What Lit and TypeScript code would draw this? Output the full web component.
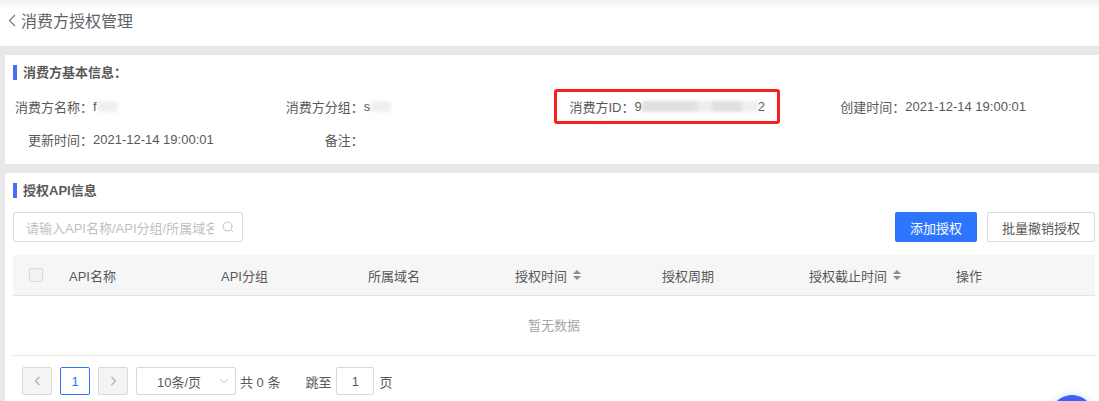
import { LitElement, html, css, svg } from "lit";
import { customElement } from "lit/decorators.js";

const sortIcon = svg`<svg class="sort" width="8" height="10" viewBox="0 0 8 10"><path d="M4 0 8 4H0zM4 10 0 6h8z" fill="#8c8c8c"/></svg>`;

@customElement("app-root")
export class AppRoot extends LitElement {
  static styles = css`
    :host {
      display: block;
      width: 1099px;
      height: 401px;
      overflow: hidden;
      position: relative;
      background: #e8e8e8;
      font-family: "Liberation Sans", "Noto Sans CJK SC", sans-serif;
      font-size: 13px;
      color: #595959;
    }
    .header {
      height: 46px;
      background: linear-gradient(#efefef 0, #fff 9px);
      display: flex;
      align-items: center;
      padding: 0 0 6px 8px;
      box-sizing: border-box;
      color: #5f6368;
      font-size: 16px;
      gap: 5px;
    }
    .body {
      padding: 9px 0 0 5px;
      display: flex;
      flex-direction: column;
      gap: 9px;
    }
    .card { background: #fff; }
    .info { height: 109px; padding: 10px 11px 0 8px; box-sizing: border-box; }
    .title {
      display: flex;
      align-items: center;
      gap: 6px;
      font-weight: bold;
      font-size: 13px;
      color: #595959;
      height: 15px;
      line-height: 15px;
    }
    .title::before {
      content: "";
      width: 4px;
      height: 15px;
      background: #4a6cf7;
    }
    .grid {
      display: grid;
      grid-template-columns: repeat(4, 1fr);
      grid-auto-rows: 33px;
      margin: 10px 0 0 -8px;
      align-items: center;
    }
    .item { display: flex; align-items: center; white-space: nowrap; }
    .label { width: 88px; text-align: right; color: #595959; flex: none; }
    .value { color: #595959; display: flex; align-items: center; }
    .smear { display: inline-block; height: 11px; filter: blur(1.5px); }
    .s1 { width: 20px; margin-left: 1px; background: #e6e6e6; opacity: .6; }
    .s2 {
      width: 116px;
      background: linear-gradient(90deg, #e0e0e0 0 45%, #eeeeee 50% 58%, #e0e0e0 62% 84%, #f0f0f0 88% 100%);
    }
    .redbox {
      position: absolute;
      left: 554px;
      top: 89px;
      width: 226px;
      height: 35px;
      box-sizing: border-box;
      border: 3px solid #f5201a;
      border-radius: 3px;
    }
    .api { height: 240px; padding: 10px 4px 0 8px; box-sizing: border-box; }
    .toolbar {
      display: flex;
      align-items: center;
      gap: 10px;
      margin-top: 14px;
      height: 30px;
    }
    .search {
      width: 230px;
      height: 30px;
      box-sizing: border-box;
      border: 1px solid #d9d9d9;
      border-radius: 2px;
      display: flex;
      align-items: center;
      padding: 0 8px 0 12px;
      gap: 8px;
      color: #bfbfbf;
    }
    .ph { flex: 1; overflow: hidden; white-space: nowrap; }
    .spacer { flex: 1; }
    .btn {
      height: 30px;
      box-sizing: border-box;
      border-radius: 2px;
      display: flex;
      align-items: center;
      justify-content: center;
      white-space: nowrap;
    }
    .primary { width: 82px; background: #2d74ff; color: #fff; }
    .ghost { width: 108px; border: 1px solid #d9d9d9; color: #595959; }
    .thead {
      margin-top: 13px;
      height: 41px;
      box-sizing: border-box;
      background: #f6f6f6;
      border-bottom: 1px solid #e4e4e4;
      display: grid;
      grid-template-columns: 56px 152px 147px 147px 147px 147px 147px 1fr;
      align-items: center;
      color: #595959;
    }
    .th { display: flex; align-items: center; gap: 6px; }
    .check {
      width: 14px;
      height: 14px;
      box-sizing: border-box;
      border: 1px solid #d9d9d9;
      border-radius: 2px;
      background: #f2f2f2;
      margin-left: 16px;
    }
    .empty {
      height: 59px;
      box-sizing: content-box;
      border-bottom: 1px solid #e4e4e4;
      display: flex;
      align-items: center;
      justify-content: center;
      color: #a6a6a6;
    }
    .empty span { margin-bottom: 2px; }
    .pager {
      display: flex;
      align-items: center;
      height: 28px;
      margin-top: 11px;
      padding-left: 9px;
      color: #595959;
    }
    .pg {
      width: 30px;
      height: 28px;
      box-sizing: border-box;
      border: 1px solid #d9d9d9;
      border-radius: 2px;
      display: flex;
      align-items: center;
      justify-content: center;
    }
    .pg.off { background: #f4f4f4; }
    .pg.on { border-color: #2d74ff; color: #2d74ff; margin: 0 8px; }
    .select {
      width: 100px;
      height: 28px;
      box-sizing: border-box;
      margin-left: 8px;
      border: 1px solid #d9d9d9;
      border-radius: 2px;
      display: flex;
      align-items: center;
      padding-left: 20px;
      gap: 18px;
    }
    .total { margin-left: 4px; }
    .jump { margin-left: 25px; }
    .jumpbox {
      width: 38px;
      height: 28px;
      box-sizing: border-box;
      margin: 0 5px;
      border: 1px solid #d9d9d9;
      border-radius: 2px;
      display: flex;
      align-items: center;
      justify-content: center;
    }
    .fab {
      position: absolute;
      left: 1050px;
      top: 395px;
      width: 44px;
      height: 44px;
      border-radius: 50%;
      background: #3b62f6;
      box-shadow: 0 0 6px rgba(59, 98, 246, .25);
    }
  `;

  render() {
    const cols: [string, boolean][] = [
      ["API名称", false],
      ["API分组", false],
      ["所属域名", false],
      ["授权时间", true],
      ["授权周期", false],
      ["授权截止时间", true],
      ["操作", false],
    ];
    return html`
      <div class="header">
        <svg width="8" height="13" viewBox="0 0 8 13"><path d="M7 1 1.5 6.5 7 12" fill="none" stroke="#7a7f85" stroke-width="1.2"/></svg>
        <span>消费方授权管理</span>
      </div>
      <div class="body">
        <section class="card info">
          <div class="title">消费方基本信息：</div>
          <div class="grid">
            <div class="item"><span class="label">消费方名称：</span><span class="value">f<i class="smear s1"></i></span></div>
            <div class="item"><span class="label">消费方分组：</span><span class="value">s<i class="smear s1"></i></span></div>
            <div class="item"><span class="label">消费方ID：</span><span class="value">9<i class="smear s2"></i>2</span></div>
            <div class="item"><span class="label">创建时间：</span><span class="value">2021-12-14 19:00:01</span></div>
            <div class="item"><span class="label">更新时间：</span><span class="value">2021-12-14 19:00:01</span></div>
            <div class="item"><span class="label">备注：</span><span class="value"></span></div>
          </div>
        </section>
        <section class="card api">
          <div class="title">授权API信息</div>
          <div class="toolbar">
            <div class="search">
              <span class="ph">请输入API名称/API分组/所属域名</span>
              <svg width="12" height="12" viewBox="0 0 12 12" fill="none" stroke="#bfbfbf" stroke-width="1"><circle cx="5.5" cy="5.5" r="4.5"/><path d="M9 9l2 2"/></svg>
            </div>
            <div class="spacer"></div>
            <div class="btn primary">添加授权</div>
            <div class="btn ghost">批量撤销授权</div>
          </div>
          <div class="thead">
            <div><div class="check"></div></div>
            ${cols.map(([t, s]) => html`<div class="th"><span>${t}</span>${s ? sortIcon : ""}</div>`)}
          </div>
          <div class="empty"><span>暂无数据</span></div>
          <div class="pager">
            <div class="pg off"><svg width="7" height="10" viewBox="0 0 7 10"><path d="M5.5 1 1.5 5l4 4" fill="none" stroke="#b0b0b0" stroke-width="1.2"/></svg></div>
            <div class="pg on">1</div>
            <div class="pg off"><svg width="7" height="10" viewBox="0 0 7 10"><path d="M1.5 1l4 4-4 4" fill="none" stroke="#b0b0b0" stroke-width="1.2"/></svg></div>
            <div class="select"><span>10条/页</span><svg width="10" height="6" viewBox="0 0 10 6"><path d="M1 1l4 4 4-4" fill="none" stroke="#c4c4c4" stroke-width="1"/></svg></div>
            <span class="total">共 0 条</span>
            <span class="jump">跳至</span>
            <div class="jumpbox">1</div>
            <span>页</span>
          </div>
        </section>
      </div>
      <div class="redbox"></div>
      <div class="fab"></div>
    `;
  }
}
